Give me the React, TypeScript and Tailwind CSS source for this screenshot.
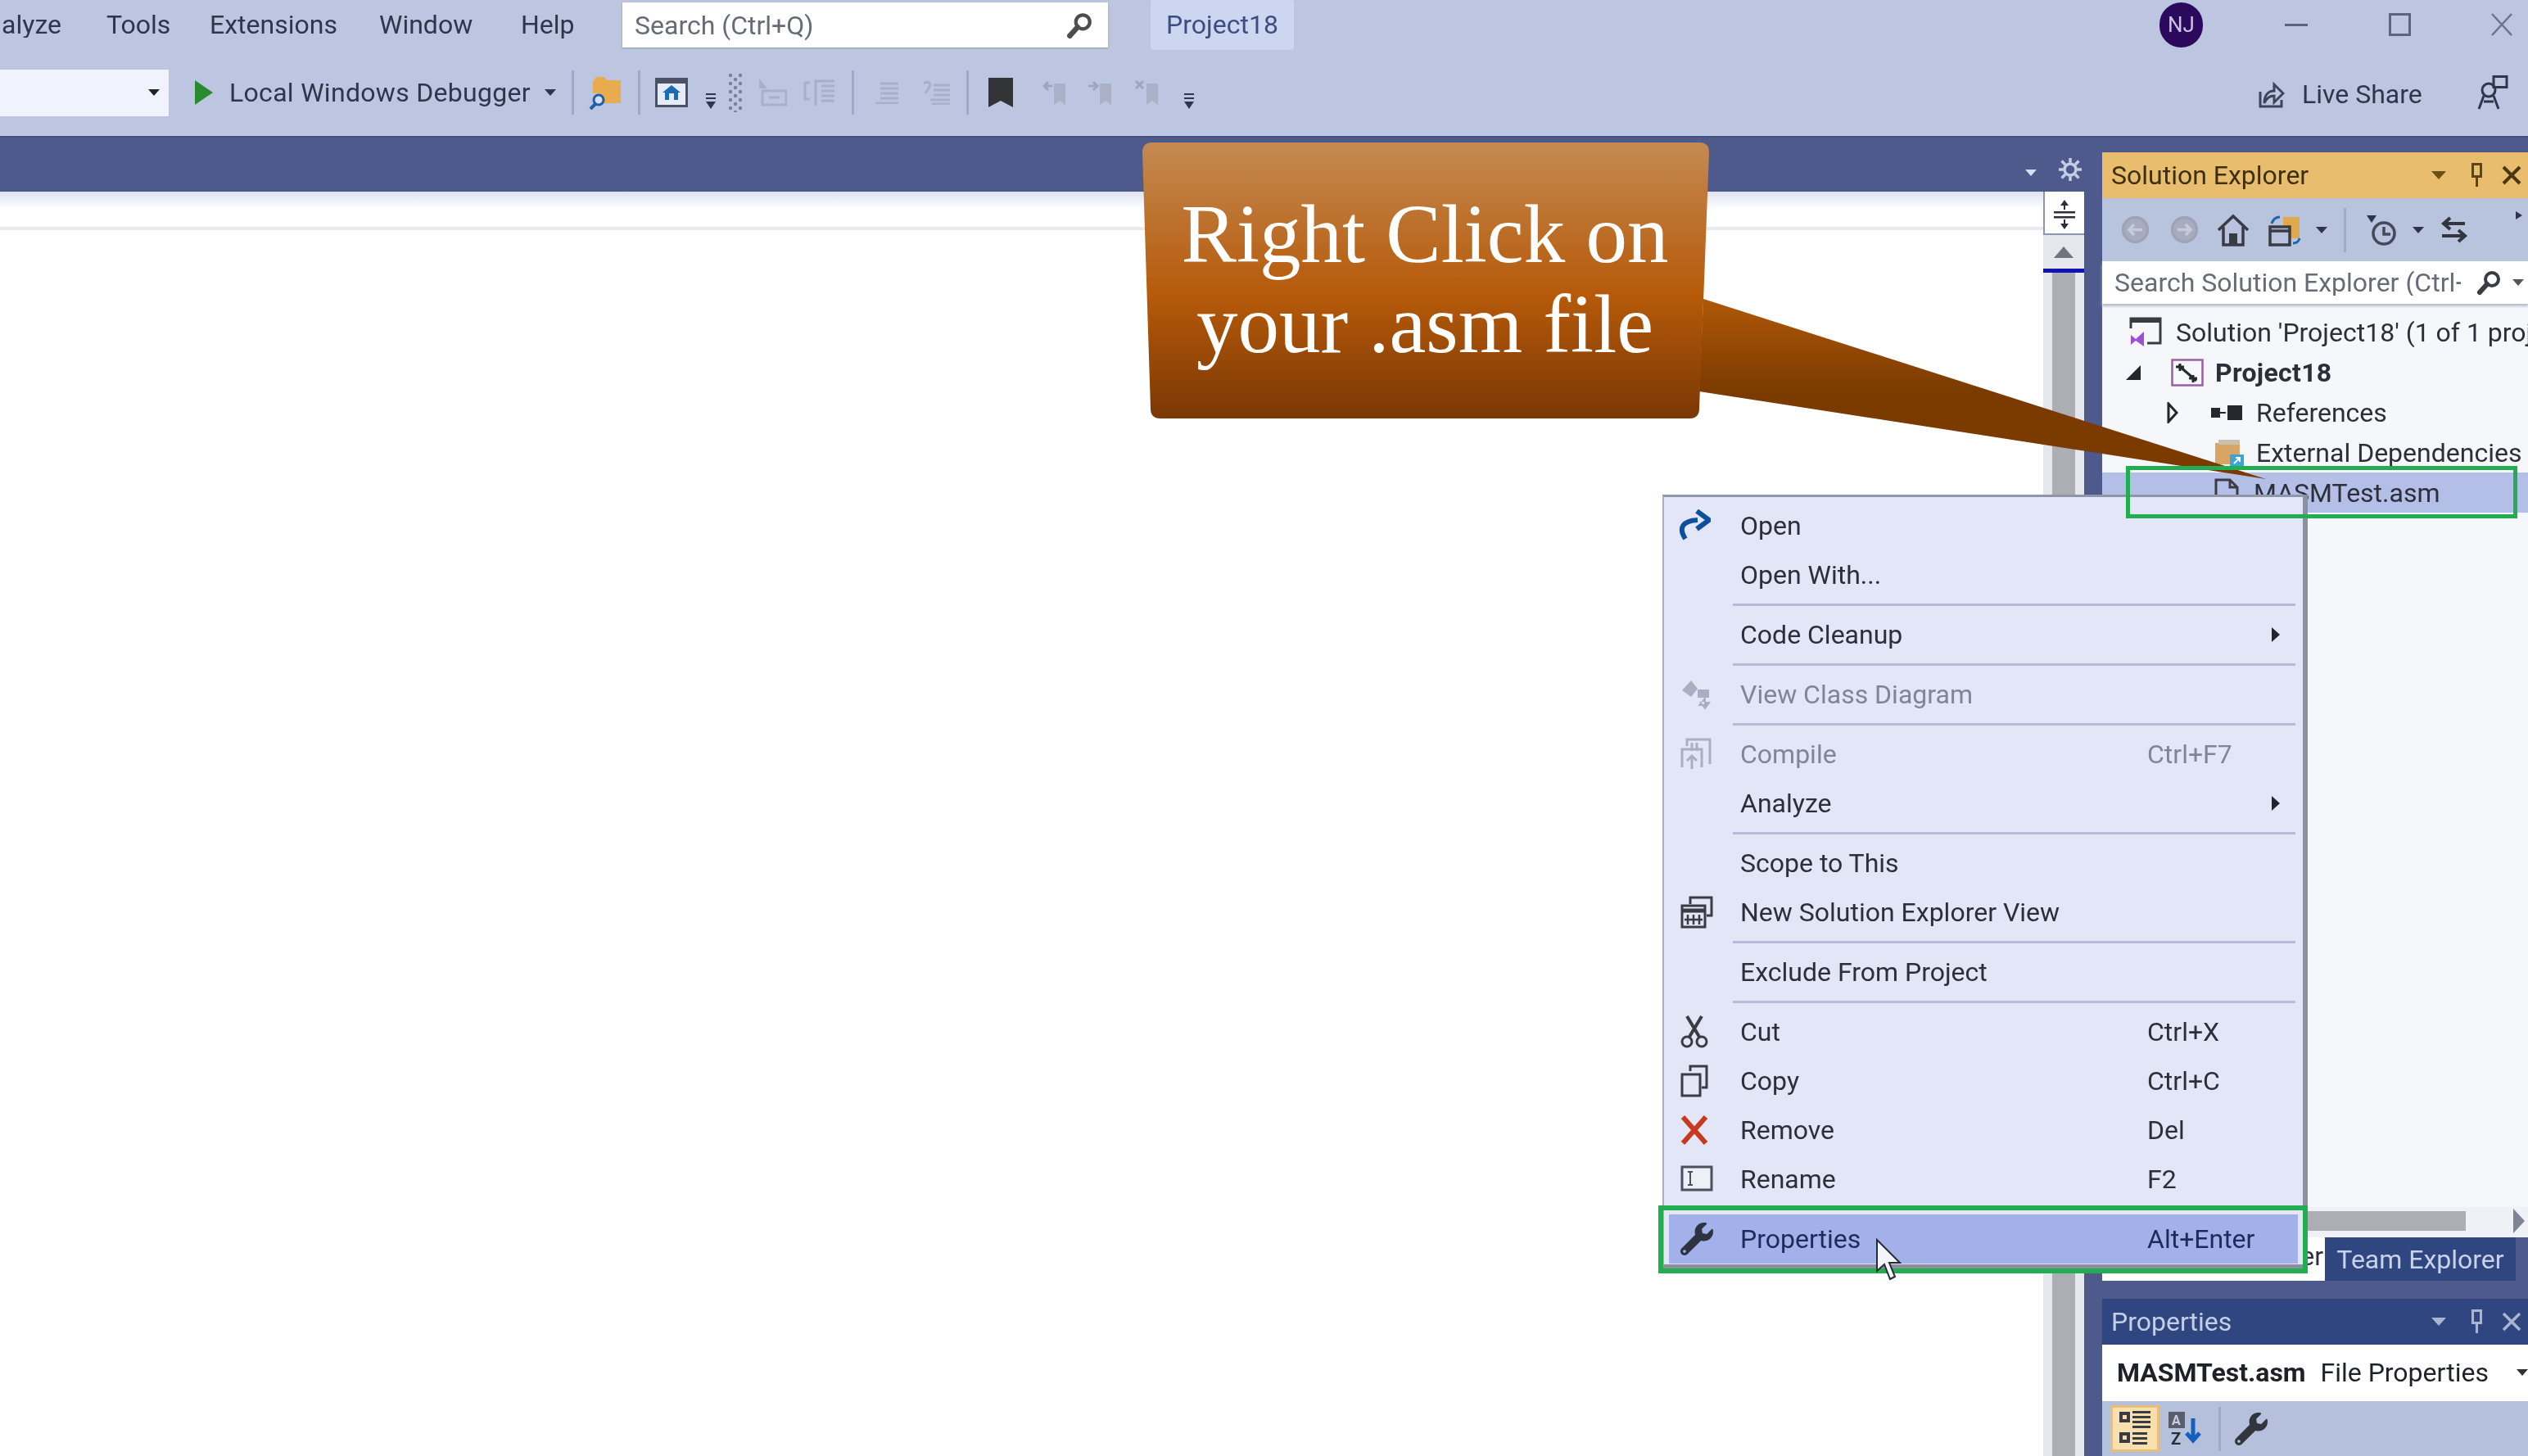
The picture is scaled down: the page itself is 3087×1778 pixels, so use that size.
import type { ReactNode } from "react";
import { FaWrench } from "react-icons/fa";

const Caret = ({ className = "" }: { className?: string }) => (
  <svg viewBox="0 0 14 8" className={`w-[14px] h-[8px] shrink-0 ${className}`} fill="currentColor">
    <path d="M0 0h14L7 8z" />
  </svg>
);

const PanelCaret = ({ className = "" }: { className?: string }) => (
  <svg viewBox="0 0 18 10" className={`w-[18px] h-[10px] shrink-0 ${className}`} fill="currentColor">
    <path d="M0 0h18L9 10z" />
  </svg>
);

const Overflow = () => (
  <svg viewBox="0 0 14 20" className="w-[14px] h-[20px] text-[#2e3550]" fill="currentColor">
    <rect x="1" y="0" width="12" height="2" />
    <rect x="1" y="5" width="12" height="2" />
    <path d="M1 10h12l-6 9z" />
  </svg>
);

const Sep = ({ className = "" }: { className?: string }) => (
  <div className={`w-[3px] h-[54px] bg-[#a0a9c8] shrink-0 ${className}`} />
);

const Magnifier = ({ className = "" }: { className?: string }) => (
  <svg viewBox="0 0 32 32" className={`shrink-0 ${className}`} fill="none" stroke="currentColor">
    <circle cx="20" cy="12" r="8" strokeWidth="4" />
    <path d="M14 18L5 28" strokeWidth="6" strokeLinecap="round" />
  </svg>
);

const GrayBookmark = ({ mark }: { mark: string }) => (
  <svg viewBox="0 0 32 34" className="w-[32px] h-[34px]">
    <path d="M14 6h14v26l-7-5-7 5z" fill="#aab0c6" />
    <path d={mark} stroke="#9ea5be" strokeWidth="3" fill="none" />
  </svg>
);

const NavCircle = ({ d, className = "" }: { d: string; className?: string }) => (
  <svg viewBox="0 0 33 33" className={`w-[33px] h-[33px] shrink-0 ${className}`} fill="none">
    <circle cx="16.5" cy="16.5" r="15" fill="#a7acbe" stroke="#9ea4b6" strokeWidth="3.5" />
    <path d={d} stroke="#c6cbdc" strokeWidth="3.5" />
  </svg>
);

function MenuBar() {
  return (
    <div className="h-[60px] flex items-center">
      <div className="w-[75px] overflow-hidden flex justify-end shrink-0">
        <span>Analyze</span>
      </div>
      <span className="ml-[55px] w-[126px]">Tools</span>
      <span className="w-[207px]">Extensions</span>
      <span className="w-[173px]">Window</span>
      <span className="w-[124px]">Help</span>
      <div className="w-[593px] h-[55px] mt-[1px] bg-white flex items-center justify-between pl-[15px] pr-[18px] text-[#666b75] shadow-[0_1px_2px_#8d94aa]">
        <span>Search (Ctrl+Q)</span>
        <Magnifier className="w-[34px] h-[34px] text-[#4d4d4d]" />
      </div>
      <div className="ml-[52px] w-[175px] h-[62px] bg-[#cdd6f0] text-[#3d4d80] flex items-center justify-center rounded-sm">
        Project18
      </div>
      <div className="ml-[1057px] w-[53px] h-[55px] rounded-full bg-[#2b0a5e] text-[#c9c3e0] text-[26px] flex items-center justify-center">
        NJ
      </div>
      <div className="ml-[100px] w-[28px] h-[3px] bg-[#5c6480]" />
      <div className="ml-[99px] w-[27px] h-[28px] border-[3px] border-[#5c6480]" />
      <svg viewBox="0 0 26 28" className="ml-[98px] w-[26px] h-[28px]" stroke="#6a7290" strokeWidth="2.5">
        <path d="M1 1l24 26M25 1L1 27" />
      </svg>
    </div>
  );
}

function Toolbar() {
  return (
    <div className="h-[106px] flex items-center text-[#30364a]">
      <div className="w-[206px] h-[57px] bg-[#f0f3fd] flex items-center justify-end pr-[11px] shrink-0">
        <Caret className="text-[#222]" />
      </div>
      <svg viewBox="0 0 22 30" className="ml-[32px] w-[22px] h-[30px]" fill="#2a8a2e">
        <path d="M0 0l22 15L0 30z" />
      </svg>
      <span className="ml-[20px] w-[385px] whitespace-nowrap tracking-[0.3px]">Local Windows Debugger</span>
      <Caret className="text-[#30364a]" />
      <Sep className="ml-[19px]" />
      <svg viewBox="0 0 40 42" className="ml-[17px] w-[40px] h-[42px]">
        <path d="M6 8l4-6h10l3 4h17v28H14V22H6z" fill="#e8ac4e" />
        <circle cx="13" cy="30" r="6" fill="#d4e0f0" stroke="#1d5fa8" strokeWidth="3" />
        <path d="M9 35l-6 6" stroke="#1d5fa8" strokeWidth="4" />
      </svg>
      <Sep className="ml-[21px]" />
      <svg viewBox="0 0 40 36" className="ml-[18px] w-[40px] h-[36px]">
        <rect x="1.5" y="1.5" width="37" height="33" fill="#e5ebf8" stroke="#4b5266" strokeWidth="3" />
        <rect x="2" y="2" width="36" height="5" fill="#4b5266" />
        <path d="M20 9l11 9h-3v9H12v-9H9z" fill="#1b6cb4" />
        <rect x="17" y="19" width="6" height="8" fill="#e5ebf8" />
      </svg>
      <div className="ml-[21px] mt-[22px]"><Overflow /></div>
      <svg viewBox="0 0 18 48" className="ml-[14px] w-[18px] h-[48px]" fill="#79809a">
        {[0, 1, 2, 3, 4].map((i) => (
          <g key={i}>
            <circle cx="3" cy={3 + i * 10} r="2.2" />
            <circle cx="15" cy={3 + i * 10} r="2.2" />
            <circle cx="9" cy={8 + i * 10} r="2.2" />
          </g>
        ))}
      </svg>
      <svg viewBox="0 0 36 34" className="ml-[18px] w-[36px] h-[34px]" fill="none" stroke="#a8afc6" strokeWidth="3">
        <path d="M2 0l10 12H2z" fill="#a8afc6" stroke="none" />
        <rect x="6" y="15" width="29" height="17" />
        <path d="M14 23h13" />
      </svg>
      <svg viewBox="0 0 40 36" className="ml-[20px] w-[40px] h-[36px]" fill="none" stroke="#a8afc6" strokeWidth="3">
        <path d="M8 6H2v20h6M14 4h24M22 10h16M22 16h16M22 22h16M22 28h16M15 2v32" />
      </svg>
      <Sep className="ml-[19px]" />
      <svg viewBox="0 0 28 28" className="ml-[26px] w-[28px] h-[28px]" fill="none" stroke="#a8afc6" strokeWidth="3">
        <path d="M6 3h22M6 9h22M6 15h22M6 21h22M0 27h28" />
      </svg>
      <svg viewBox="0 0 34 30" className="ml-[29px] w-[34px] h-[30px]" fill="none" stroke="#a8afc6" strokeWidth="3">
        <path d="M2 4c6-4 10 0 6 6l-4 6M14 6h20M14 12h20M14 18h20M10 24h24M12 29h22" />
      </svg>
      <Sep className="ml-[20px]" />
      <svg viewBox="0 0 30 36" className="ml-[24px] w-[30px] h-[36px]" fill="#333438">
        <path d="M0 0h30v36l-15-8-15 8z" />
      </svg>
      <div className="ml-[36px]"><GrayBookmark mark="M12 9H2M7 4L2 9l5 5" /></div>
      <div className="ml-[24px]"><GrayBookmark mark="M0 9h11M6 4l5 5-5 5" /></div>
      <div className="ml-[25px]"><GrayBookmark mark="M1 3l9 9M10 3l-9 9" /></div>
      <div className="ml-[27px] mt-[22px]"><Overflow /></div>
      <svg viewBox="0 0 32 38" className="ml-[1299px] w-[32px] h-[38px] shrink-0" fill="none" stroke="#3e4458" strokeWidth="3">
        <path d="M2 18v18h26v-8" />
        <path d="M7 32c0-10 5-15 12-15V9l11 11-11 11v-8c-5 0-9 2-12 9z" />
      </svg>
      <span className="ml-[21px] mt-[4px] w-[214px] shrink-0">Live Share</span>
      <svg viewBox="0 0 38 42" className="w-[38px] h-[42px] shrink-0" fill="none" stroke="#30364a" strokeWidth="3">
        <rect x="20" y="1.5" width="16" height="13" />
        <circle cx="14" cy="18" r="8" />
        <path d="M8 25L2 41M20 25l6 16M8 32l12 0" />
      </svg>
    </div>
  );
}

function TreeRow({ indent, children, className = "" }: { indent: string; children: ReactNode; className?: string }) {
  return (
    <div className={`h-[49px] flex items-center whitespace-nowrap [&>svg]:shrink-0 ${indent} ${className}`}>{children}</div>
  );
}

function SolutionExplorer() {
  return (
    <div className="h-[1325px] flex flex-col">
      <div className="h-[56px] bg-[#e8bd6e] text-[#3d2f10] flex items-center pl-[11px]">
        <span className="w-[391px]">Solution Explorer</span>
        <PanelCaret className="text-[#6b4e14]" />
        <div className="ml-[29px] w-[16px] h-[30px] flex flex-col items-center">
          <div className="w-[13px] h-[18px] border-[3px] border-[#5c4515]" />
          <div className="w-[3px] h-[11px] bg-[#5c4515]" />
        </div>
        <svg viewBox="0 0 24 24" className="ml-[23px] w-[24px] h-[24px]" stroke="#4a3710" strokeWidth="4">
          <path d="M2 2l20 20M22 2L2 22" />
        </svg>
      </div>
      <div className="h-[77px] bg-[#b8c3de] flex items-center text-[#3a3f50]">
        <NavCircle className="ml-[24px]" d="M25 16.5H9M15 10l-6 6.5 6 6.5" />
        <NavCircle className="ml-[27px]" d="M8 16.5h16M18 10l6 6.5-6 6.5" />
        <svg viewBox="0 0 38 40" className="ml-[24px] w-[38px] h-[40px]" fill="none" stroke="#3a3c44" strokeWidth="3.5">
          <path d="M1 20L19 3l18 17M7 16v22h24V16" />
          <rect x="14" y="24" width="10" height="14" fill="#3a3c44" stroke="none" />
        </svg>
        <svg viewBox="0 0 40 40" className="ml-[24px] w-[40px] h-[40px]">
          <path d="M18 4h20v26H18z" fill="#e0a94e" />
          <rect x="2" y="16" width="24" height="22" fill="#b8c3de" stroke="#3a3c44" strokeWidth="3.5" />
          <path d="M2 21h24" stroke="#3a3c44" strokeWidth="3.5" />
          <path d="M4 12c2-6 6-8 10-8M30 36c4 0 7-2 8-6" stroke="#1b66b0" strokeWidth="3" fill="none" />
        </svg>
        <Caret className="ml-[18px] text-[#2c3350]" />
        <Sep className="ml-[20px] h-[52px]" />
        <svg viewBox="0 0 36 40" className="ml-[25px] w-[36px] h-[40px]" fill="none" stroke="#44485a" strokeWidth="3.5">
          <path d="M0 2h12L6 11z" fill="#2c3350" stroke="none" />
          <circle cx="21" cy="24" r="13" />
          <path d="M21 16v9h8" />
        </svg>
        <Caret className="ml-[20px] text-[#2c3350]" />
        <svg viewBox="0 0 34 34" className="ml-[20px] w-[34px] h-[34px]" fill="none" stroke="#33363f" strokeWidth="4">
          <path d="M30 9H4M12 2L4 9l8 7M2 24h28M22 17l8 7-8 7" />
        </svg>
        <svg viewBox="0 0 8 10" className="ml-[58px] mb-[36px] w-[8px] h-[10px]" fill="#2c3350">
          <path d="M0 0l8 5-8 5z" />
        </svg>
      </div>
      <div className="h-[52px] bg-white flex items-center pl-[15px] text-[#666b75] shadow-[0_3px_3px_#b5bccd] z-10">
        <span className="w-[423px] shrink-0 overflow-hidden whitespace-nowrap">Search Solution Explorer (Ctrl+;)</span>
        <Magnifier className="ml-[18px] w-[32px] h-[34px] text-[#3a3c44]" />
        <Caret className="ml-[13px] text-[#555]" />
      </div>
      <div className="flex-1 bg-[#f6f7fb] pt-[10px] overflow-hidden text-[#2c2f3a]">
        <TreeRow indent="pl-[33px]">
          <svg viewBox="0 0 40 38" className="w-[40px] h-[38px]" fill="none">
            <path d="M2 14V2h36v30H22" stroke="#3a3c44" strokeWidth="3" />
            <rect x="2" y="2" width="36" height="5" fill="#3a3c44" />
            <path d="M2 22l6 5 10-9v18l-10-7-6 5z" fill="#9a4fd6" />
          </svg>
          <span className="ml-[17px]">Solution 'Project18' (1 of 1 project)</span>
        </TreeRow>
        <TreeRow indent="pl-[29px]">
          <svg viewBox="0 0 18 18" className="w-[18px] h-[18px]" fill="#23252d">
            <path d="M18 0v18H0z" />
          </svg>
          <svg viewBox="0 0 40 34" className="ml-[37px] w-[40px] h-[34px]" fill="none">
            <rect x="1.5" y="1.5" width="37" height="31" fill="#f6f7fb" stroke="#9a5ea8" strokeWidth="2.5" />
            <path d="M9 8l22 19M11 15V6M6 10h10M27 29v-9M22 24h10" stroke="#26282f" strokeWidth="3" />
          </svg>
          <span className="ml-[14px] font-bold tracking-[0.3px]">Project18</span>
        </TreeRow>
        <TreeRow indent="pl-[79px]">
          <svg viewBox="0 0 14 26" className="w-[14px] h-[26px]" fill="none" stroke="#23252d" strokeWidth="3">
            <path d="M2 2l10 11L2 24z" />
          </svg>
          <svg viewBox="0 0 40 18" className="ml-[40px] w-[40px] h-[18px]" fill="#26282f">
            <rect x="0" y="3" width="11" height="12" />
            <rect x="11" y="8" width="7" height="2" />
            <rect x="20" y="0" width="18" height="18" />
          </svg>
          <span className="ml-[15px]">References</span>
        </TreeRow>
        <TreeRow indent="pl-[136px]">
          <svg viewBox="0 0 38 36" className="w-[38px] h-[36px]">
            <path d="M2 6h30v26H2z" fill="#d8a566" />
            <path d="M6 2h26v6H6z" fill="#c9c1ae" />
            <rect x="20" y="20" width="17" height="16" fill="#3aa6d8" />
            <path d="M25 31l7-7M27 24h5v5" stroke="#fff" strokeWidth="2" fill="none" />
          </svg>
          <span className="ml-[14px]">External Dependencies</span>
        </TreeRow>
        <TreeRow indent="pl-[137px]" className="bg-[#b3bfe6]">
          <svg viewBox="0 0 30 36" className="w-[30px] h-[36px]" fill="none" stroke="#3a3c44" strokeWidth="3">
            <path d="M2 2h17l9 9v23H2zM19 2v9h9" />
          </svg>
          <span className="ml-[18px]">MASMTest.asm</span>
        </TreeRow>
      </div>
      <div className="h-[37px] bg-[#f0f1f6] flex items-center pb-[4px]">
        <div className="w-[444px] h-[24px] bg-[#adaeb4]" />
        <svg viewBox="0 0 14 30" className="ml-[58px] w-[14px] h-[30px]" fill="#7f8494">
          <path d="M0 0l14 15L0 30z" />
        </svg>
      </div>
    </div>
  );
}

function PropertiesPanel() {
  return (
    <div className="flex-1 flex flex-col">
      <div className="h-[53px] flex">
        <div className="w-[272px] bg-white text-[#2c2f3a] flex items-center justify-end pr-[2px] pb-[7px]">Solution Explorer</div>
        <div className="w-[233px] bg-[#2f4680] text-[#c8d2e8] flex items-center justify-center">Team Explorer</div>
      </div>
      <div className="h-[22px]" />
      <div className="h-[56px] bg-[#2f4680] text-[#c5cfe6] flex items-center pl-[11px]">
        <span className="w-[391px]">Properties</span>
        <PanelCaret className="text-[#a9b5d3]" />
        <div className="ml-[29px] w-[16px] h-[30px] flex flex-col items-center">
          <div className="w-[13px] h-[18px] border-[3px] border-[#a9b5d3]" />
          <div className="w-[3px] h-[11px] bg-[#a9b5d3]" />
        </div>
        <svg viewBox="0 0 24 24" className="ml-[23px] w-[24px] h-[24px]" stroke="#a9b5d3" strokeWidth="3.5">
          <path d="M2 2l20 20M22 2L2 22" />
        </svg>
      </div>
      <div className="h-[69px] bg-white text-[#1f2128] flex items-center pl-[18px] pb-[2px] whitespace-nowrap">
        <span className="font-bold w-[249px]">MASMTest.asm</span>
        <span className="w-[240px]">File Properties</span>
        <Caret className="text-[#333]" />
      </div>
      <div className="flex-1 bg-[#b5c0dc] flex items-center pl-[10px]">
        <div className="w-[60px] h-[57px] bg-[#f9dfae] border-[3px] border-[#e6c07a] flex items-center justify-center">
          <svg viewBox="0 0 38 44" className="w-[38px] h-[44px]" fill="#3a3c44">
            <rect x="0" y="1" width="13" height="13" />
            <rect x="4" y="5" width="5" height="5" fill="#f9dfae" />
            <rect x="0" y="26" width="13" height="13" />
            <rect x="4" y="30" width="5" height="5" fill="#f9dfae" />
            {[0, 6, 12, 18].map((y) => (
              <rect key={y} x="16" y={y} width="22" height="3" />
            ))}
            {[26, 32, 38].map((y) => (
              <rect key={y} x="16" y={y} width="18" height="3" />
            ))}
          </svg>
        </div>
        <svg viewBox="0 0 40 42" className="ml-[11px] w-[40px] h-[42px]">
          <rect x="0" y="0" width="20" height="20" fill="#5a5e6c" />
          <text x="4" y="16" fontSize="16" fill="#c9cfe0" fontWeight="700">A</text>
          <text x="3" y="40" fontSize="20" fill="#2c2e36" fontWeight="700">Z</text>
          <path d="M30 8v26M22 26l8 9 8-9" stroke="#1560bd" strokeWidth="5" fill="none" />
        </svg>
        <Sep className="ml-[21px]" />
        <FaWrench className="ml-[17px] w-[40px] h-[40px] text-[#33353c]" />
      </div>
    </div>
  );
}

type Item = { label: string; shortcut?: string; arrow?: boolean; disabled?: boolean; icon?: ReactNode } | "sep";

const items: Item[] = [
  {
    label: "Open",
    icon: (
      <svg viewBox="0 0 40 38" className="-ml-[3px] -mt-[2px] w-[40px] h-[38px]" fill="none">
        <path d="M9 36C0 22 6 14 24 13" stroke="#0d4f9c" strokeWidth="6" />
        <path d="M23 2l15 11-15 11" stroke="#0d4f9c" strokeWidth="6" />
      </svg>
    ),
  },
  { label: "Open With..." },
  "sep",
  { label: "Code Cleanup", arrow: true },
  "sep",
  {
    label: "View Class Diagram",
    disabled: true,
    icon: (
      <svg viewBox="0 0 38 38" className="w-[38px] h-[38px]" fill="#a9afc2">
        <path d="M2 14L13 2l8 10-8 10z" />
        <path d="M22 14h12v8H22zM30 22v10h-8M24 28l6 8 6-8" stroke="#a9afc2" strokeWidth="2" />
      </svg>
    ),
  },
  "sep",
  {
    label: "Compile",
    shortcut: "Ctrl+F7",
    disabled: true,
    icon: (
      <svg viewBox="0 0 38 40" className="w-[38px] h-[40px]" fill="none" stroke="#a9afc2" strokeWidth="3">
        <path d="M8 10V2h28v30M14 16V6M20 16V6M2 36V14h24v22M14 38V24M8 28l6-6 6 6" />
      </svg>
    ),
  },
  { label: "Analyze", arrow: true },
  "sep",
  { label: "Scope to This" },
  {
    label: "New Solution Explorer View",
    icon: (
      <svg viewBox="0 0 40 40" className="w-[40px] h-[40px]" fill="none" stroke="#3a3c44" strokeWidth="3">
        <path d="M12 10V2h26v22h-6" />
        <rect x="2" y="12" width="28" height="26" />
        <path d="M2 18h28" strokeWidth="5" />
        <path d="M9 23v12M16 23v12M23 23v12M5 29h22" strokeWidth="2.5" />
      </svg>
    ),
  },
  "sep",
  { label: "Exclude From Project" },
  "sep",
  {
    label: "Cut",
    shortcut: "Ctrl+X",
    icon: (
      <svg viewBox="0 0 34 40" className="w-[34px] h-[40px]" fill="none" stroke="#3a3c44" strokeWidth="3">
        <circle cx="8" cy="32" r="6" />
        <circle cx="26" cy="32" r="6" />
        <path d="M11 26L26 1M23 26L8 1" strokeWidth="4" />
      </svg>
    ),
  },
  {
    label: "Copy",
    shortcut: "Ctrl+C",
    icon: (
      <svg viewBox="0 0 34 40" className="w-[34px] h-[40px]" fill="none" stroke="#3a3c44" strokeWidth="3">
        <path d="M12 8V2h20v26h-6" />
        <rect x="2" y="12" width="22" height="26" />
      </svg>
    ),
  },
  {
    label: "Remove",
    icon: (
      <svg viewBox="0 0 34 36" className="w-[34px] h-[36px]" stroke="#c8391e" strokeWidth="6">
        <path d="M3 2l28 32M31 2L3 34" />
      </svg>
    ),
    shortcut: "Del",
  },
  {
    label: "Rename",
    shortcut: "F2",
    icon: (
      <svg viewBox="0 0 40 32" className="-mt-[3px] w-[40px] h-[32px]" fill="#eef0f8" stroke="#4b5060" strokeWidth="3">
        <rect x="2" y="2" width="36" height="28" />
        <path d="M9 8h6M12 8v16M9 24h6" strokeWidth="2" />
      </svg>
    ),
  },
  "sep",
];

function ContextMenu() {
  return (
    <div className="absolute left-[2030px] top-[604px] w-[788px] h-[946px] bg-[#e3e6f7] border-l-2 border-t-[3px] border-r-[6px] border-b-[6px] border-l-[#a9afc4] border-t-[#8f96aa] border-r-[#8b8f9e] border-b-[#8b8f9e] pt-[5px] text-[#2c2f3a] z-20">
      {items.map((item, i) =>
        item === "sep" ? (
          <div key={i} className="h-[13px] flex items-center pl-[84px] pr-[9px]">
            <div className="w-full h-[3px] bg-[#b6bcd8]" />
          </div>
        ) : (
          <div key={i} className={`h-[60px] flex items-center ${item.disabled ? "text-[#7f8597]" : ""}`}>
            <div className="w-[93px] pl-[20px] shrink-0 flex items-center">{item.icon}</div>
            <span className="w-[497px] shrink-0">{item.label}</span>
            <span className="w-[154px] shrink-0">{item.shortcut}</span>
            {item.arrow && (
              <svg viewBox="0 0 10 18" className="-ml-[2px] w-[10px] h-[18px]" fill="#23252d">
                <path d="M0 0l10 9-10 9z" />
              </svg>
            )}
          </div>
        ),
      )}
      <div className="h-[60px] mx-[6px] bg-[#a2b1ea] flex items-center text-[#1e2a5c]">
        <div className="w-[87px] pl-[14px] shrink-0 flex items-center">
          <FaWrench className="w-[40px] h-[40px] text-[#2e3342]" />
        </div>
        <span className="w-[497px] shrink-0">Properties</span>
        <span className="shrink-0">Alt+Enter</span>
      </div>
    </div>
  );
}

function Callout() {
  return (
    <div className="absolute left-[1395px] top-[174px] w-[1380px] h-[420px] z-10">
      <svg viewBox="0 0 1380 420" className="absolute inset-0 w-full h-full">
        <defs>
          <linearGradient id="bodyFill" x1="0" y1="0" x2="0" y2="1">
            <stop offset="0" stopColor="#c48a52" />
            <stop offset="0.55" stopColor="#b65a0a" />
            <stop offset="1" stopColor="#7a3804" />
          </linearGradient>
          <linearGradient id="tailFill" gradientUnits="userSpaceOnUse" x1="0" y1="185" x2="0" y2="305">
            <stop offset="0" stopColor="#b25a08" />
            <stop offset="1" stopColor="#7a3a00" />
          </linearGradient>
        </defs>
        <path d="M685 191L680 304L1372 411z" fill="url(#tailFill)" />
        <path d="M0 12Q0 0 12 0H680Q692 0 692 12L680 325Q680 337 668 337H22Q10 337 10 325z" fill="url(#bodyFill)" />
      </svg>
      <div className="relative w-[690px] pt-[57px] text-center text-white text-[101px] leading-[110px] font-['Liberation_Serif',serif]">
        Right Click on
        <br />
        your .asm file
      </div>
    </div>
  );
}

export default function App() {
  return (
    <div className="relative w-[3087px] h-[1778px] overflow-hidden bg-[#bcc6e0] text-[#30364a] text-[32px] leading-none font-['Roboto',sans-serif] blur-[0.6px]">
      <MenuBar />
      <Toolbar />
      <div className="h-[1612px] flex bg-[#4d5a8b] border-t-2 border-t-[#46527e]">
        <div className="w-[2545px] shrink-0 mt-[66px] bg-white flex">
          {/* editor */}
          <div className="flex-1 h-[47px] bg-gradient-to-b from-[#dfe2f2] via-white to-white border-b-[4px] border-b-[#eaebf1]" />
          <div className="w-[50px] flex flex-col">
            <div className="h-[53px] bg-white border-l-2 border-b-2 border-[#8c94b4] flex flex-col items-center justify-center pt-[4px] text-[#2c2f3a]">
              <svg viewBox="0 0 26 36" className="w-[26px] h-[36px]" fill="#2c2f3a">
                <path d="M13 0l5 7H8zM13 36l-5-7h10zM0 14h26v2.5H0zM0 20h26v2.5H0zM12 6h2v6h-2zM12 24h2v6h-2z" />
              </svg>
            </div>
            <div className="h-[41px] bg-[#e6e7ec] flex items-center justify-center">
              <svg viewBox="0 0 24 14" className="w-[24px] h-[14px]" fill="#70747f">
                <path d="M12 0l12 14H0z" />
              </svg>
            </div>
            <div className="h-[5px] bg-[#1212b0]" />
            <div className="flex-1 bg-[#e6e7ec] px-[11px]">
              <div className="h-full bg-[#adaeb4]" />
            </div>
          </div>
        </div>
        <div className="flex-1 ml-[22px] mt-[18px] flex flex-col min-w-0">
          <SolutionExplorer />
          <PropertiesPanel />
        </div>
      </div>

      {/* gear + dropdown in tab band */}
      <Caret className="absolute left-[2473px] top-[207px] text-[#d5dcf0]" />
      <svg viewBox="0 0 24 24" className="absolute left-[2514px] top-[193px] w-[28px] h-[28px]" fill="none" stroke="#c5cde6" strokeWidth="3">
        <circle cx="12" cy="12" r="6" />
        <path d="M12 0v5M12 19v5M0 12h5M19 12h5M3 3l4 4M17 17l4 4M21 3l-4 4M7 17l-4 4" />
      </svg>

      <Callout />
      <ContextMenu />

      {/* green highlight boxes */}
      <div className="absolute left-[2596px] top-[569px] w-[478px] h-[64px] border-[5px] border-[#22ad50] z-30" />
      <div className="absolute left-[2025px] top-[1472px] w-[793px] h-[83px] border-[6px] border-[#22ad50] z-30" />

      <svg viewBox="0 0 34 56" className="absolute left-[2290px] top-[1512px] w-[34px] h-[56px] z-40" fill="#f4f5fb" stroke="#2a2c34" strokeWidth="2">
        <path d="M2 2v38l9-8 7 18 6-3-7-17h13z" />
      </svg>
    </div>
  );
}
